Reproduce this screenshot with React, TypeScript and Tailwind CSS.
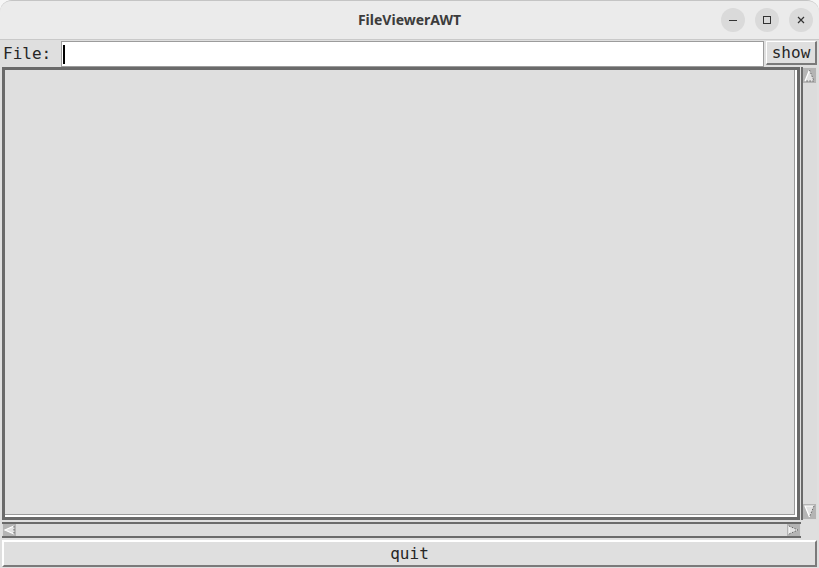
import React from "react";

const mono = { fontFamily: '"DejaVu Sans Mono", "Liberation Mono", monospace' };

function ArrowBox({ dir, w = 13, h = 15 }: { dir: "up" | "down" | "left" | "right"; w?: number; h?: number }) {
  const paths: Record<string, { light: string; dark: string; fill: string }> = {
    up: {
      fill: `M${w / 2} 2 L${w - 2} ${h - 2} L2 ${h - 2} Z`,
      light: `M2 ${h - 2} L${w / 2} 2`,
      dark: `M${w / 2} 2 L${w - 2} ${h - 2} L2 ${h - 2}`,
    },
    down: {
      fill: `M2 2 L${w - 2} 2 L${w / 2} ${h - 2} Z`,
      light: `M${w / 2} ${h - 2} L2 2 L${w - 2} 2`,
      dark: `M${w - 2} 2 L${w / 2} ${h - 2}`,
    },
    left: {
      fill: `M2 ${h / 2} L${w - 2} 2 L${w - 2} ${h - 2} Z`,
      light: `M${w - 2} ${h - 2} L2 ${h / 2} L${w - 2} 2`,
      dark: `M${w - 2} 2 L${w - 2} ${h - 2}`,
    },
    right: {
      fill: `M2 2 L${w - 2} ${h / 2} L2 ${h - 2} Z`,
      light: `M2 ${h - 2} L2 2`,
      dark: `M2 2 L${w - 2} ${h / 2} L2 ${h - 2}`,
    },
  };
  const p = paths[dir];
  return (
    <svg width={w} height={h} viewBox={`0 0 ${w} ${h}`} className="block shrink-0">
      <rect x="0" y="0" width={w} height={h} fill="#b4b4b4" />
      <path d={p.fill} fill="#e2e2e2" />
      <path d={p.light} fill="none" stroke="#ffffff" strokeWidth="1.2" />
      <path d={p.dark} fill="none" stroke="#666666" strokeWidth="1" strokeDasharray="1.5 1.5" />
    </svg>
  );
}

export default function App() {
  return (
    <div className="w-[819px] h-[568px] overflow-hidden bg-[#f6f6f6]">
      <div className="w-full h-full flex flex-col rounded-t-[12px] overflow-hidden bg-[#dfdfdf] border-t border-[#c4c4c4]">
        {/* title bar */}
        <div className="h-[39px] shrink-0 bg-[#ebebeb] border-b border-[#c9c9c9] grid grid-cols-[1fr_auto_1fr] items-center">
          <div />
          <div
            className="text-[14px] font-bold text-[#3c3c3c] leading-none"
            style={{ fontFamily: '"Noto Sans", "Open Sans", sans-serif' }}
          >
            FileViewerAWT
          </div>
          <div className="flex justify-end items-center gap-[10px] pr-[6px]">
            <div className="w-[24px] h-[24px] rounded-full bg-[#dadada] flex items-center justify-center">
              <div className="w-[8px] h-[1px] bg-[#333]" />
            </div>
            <div className="w-[24px] h-[24px] rounded-full bg-[#dadada] flex items-center justify-center">
              <div className="w-[8px] h-[8px] border border-[#333]" />
            </div>
            <div className="w-[24px] h-[24px] rounded-full bg-[#dadada] flex items-center justify-center">
              <svg width="8" height="8" viewBox="0 0 8 8">
                <path d="M1 1 L7 7 M7 1 L1 7" stroke="#333" strokeWidth="1.2" />
              </svg>
            </div>
          </div>
        </div>

        {/* File row */}
        <div className="h-[27px] shrink-0 flex items-start">
          <div className="w-[61px] h-[27px] flex items-center pl-[3px] text-[16px] text-[#262626] leading-none" style={mono}>
            File:
          </div>
          <div className="flex-1 h-[26px] mt-[1px] bg-white border border-[#9c9c9c] flex items-center pl-[1px]">
            <div className="w-[2px] h-[19px] bg-black" />
          </div>
          <div
            className="w-[51px] h-[24px] mt-[1px] ml-[2px] mr-[2px] bg-[#dfdfdf] border-t border-l border-[#ffffff] border-b-2 border-r-2 border-b-[#7a7a7a] border-r-[#7a7a7a] flex items-center justify-center text-[16px] text-[#262626] leading-none"
            style={mono}
          >
            show
          </div>
        </div>

        {/* text area with scrollbars */}
        <div className="flex-1 flex flex-col px-[2px]">
          <div className="flex-1 flex">
            <div className="flex-1 border-[3px] border-[#6a6a6a]">
              <div className="w-full h-full border-r-[2px] border-b-[2px] border-[#ffffff] bg-[#dfdfdf]">
                <div className="w-full h-full border-r border-b border-[#9a9a9a]" />
              </div>
            </div>
            <div className="w-[16px] ml-[1px] flex flex-col justify-between border-l-2 border-[#6a6a6a] bg-[#dcdcdc] py-[1px]">
              <ArrowBox dir="up" />
              <ArrowBox dir="down" />
            </div>
          </div>
          <div className="h-[16px] mt-[2px] mr-[16px] flex justify-between items-center border-t-2 border-b-2 border-[#6a6a6a] bg-[#dcdcdc] px-[1px]">
            <ArrowBox dir="left" w={13} h={12} />
            <ArrowBox dir="right" w={13} h={12} />
          </div>
        </div>

        {/* quit */}
        <div className="h-[27px] shrink-0 mt-[2px] mx-[2px] mb-[1px] bg-[#dfdfdf] border-t-2 border-l-2 border-white border-b-2 border-r-2 border-b-[#7a7a7a] border-r-[#7a7a7a] flex items-center justify-center text-[16px] text-[#262626] leading-none" style={mono}>
          quit
        </div>
      </div>
    </div>
  );
}
